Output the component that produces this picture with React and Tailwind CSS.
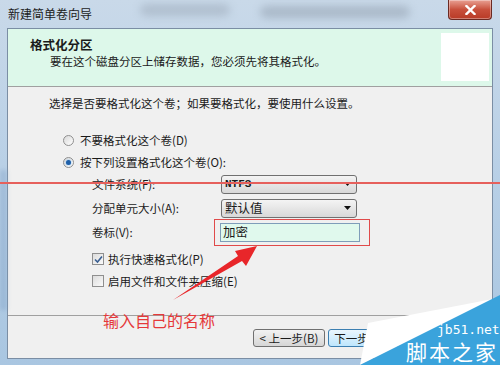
import React from 'react';

const font = { fontFamily: '"Noto Sans CJK SC", "Noto Sans", sans-serif' };

const Radio = ({ checked, label }) => (
  <div className="flex items-center h-[16px] pl-[14px]">
    <span className="w-[11px] h-[11px] rounded-full border border-[#8f8f8f] bg-gradient-to-br from-[#d9d9d9] to-[#ffffff] flex items-center justify-center">
      {checked && <span className="w-[5px] h-[5px] rounded-full bg-[#1f5fa8] shadow-[0_0_2px_#6cb3f0]" />}
    </span>
    <span className="ml-[6px]">{label}</span>
  </div>
);

const Check = ({ checked, label }) => (
  <div className="flex items-center h-[22px]">
    <span className="w-[12px] h-[12px] border border-[#8f8f8f] bg-gradient-to-br from-[#dcdcdc] to-[#fafafa] flex items-center justify-center">
      {checked && (
        <svg width="9" height="9" viewBox="0 0 9 9">
          <path d="M1 4.5 L3.5 7 L8 1.5" fill="none" stroke="#3a5f92" strokeWidth="1.6" />
        </svg>
      )}
    </span>
    <span className="ml-[4px]">{label}</span>
  </div>
);

const Select = ({ value, mono }) => (
  <div className="w-[136px] h-[19px] rounded-[3px] border border-[#707070] bg-gradient-to-b from-[#f4f4f4] to-[#d8d8d8] flex items-center justify-between pl-[3px] pr-[5px]">
    <span className={mono ? 'font-bold text-[11px] leading-[14px]' : 'text-[12.5px] leading-[16px]'} style={mono ? { fontFamily: '"Liberation Mono", monospace' } : undefined}>{value}</span>
    <svg width="7" height="4" viewBox="0 0 7 4"><path d="M0 0 H7 L3.5 4 Z" fill="#111" /></svg>
  </div>
);

const FormRow = ({ label, children }) => (
  <div className="flex items-center h-[24px]">
    <span className="w-[129px]">{label}</span>
    {children}
  </div>
);

export default function App() {
  return (
    <div className="relative w-[500px] h-[365px] overflow-hidden bg-gradient-to-b from-[#c9d9e9] via-[#b7cfe6] to-[#a9c6e1] text-[11.5px] text-[#1a1a1a]" style={font}>
      {/* blurred glass behind title */}
      <div className="absolute left-[140px] top-[4px] w-[90px] h-[12px] rounded-full bg-[#8c99a8] opacity-40 blur-[4px]" />
      <div className="absolute left-[260px] top-[6px] w-[150px] h-[12px] rounded-full bg-[#7d8a99] opacity-40 blur-[4px]" />
      <div className="absolute left-0 top-[170px] w-[7px] h-[140px] bg-[#7f9fc4] opacity-40 blur-[2px]" />

      {/* title bar */}
      <div className="h-[28px] flex items-start justify-between pl-[8px] pr-[8px]">
        <span className="mt-[6px] text-[12px] text-[#1c1c1c] leading-[16px]">新建简单卷向导</span>
        <div className="w-[44px] h-[20px] rounded-b-[4px] border border-t-0 border-[#6b2a22] bg-gradient-to-b from-[#e8a093] via-[#c8503c] to-[#b83a26] flex items-center justify-center shadow-[inset_0_0_0_1px_rgba(255,255,255,0.35)]">
          <svg width="11" height="10" viewBox="0 0 11 10">
            <path d="M1.5 1 L9.5 9 M9.5 1 L1.5 9" stroke="#fff" strokeWidth="2.4" strokeLinecap="square" />
          </svg>
        </div>
      </div>

      {/* client */}
      <div className="mx-[7px] h-[331px] border border-[#7b8ea4] flex flex-col bg-[#f0f0f0]">
        <div className="h-[58px] bg-[#ddf8ea] border-b border-[#a0a0a0] flex justify-between">
          <div className="pt-[8px]">
            <div className="pl-[22px] font-bold text-[12.5px] leading-[16px]">格式化分区</div>
            <div className="pl-[42px] leading-[16px]">要在这个磁盘分区上储存数据，您必须先将其格式化。</div>
          </div>
          <div className="w-[48px] h-[48px] bg-white mt-[4px] mr-[3px]" />
        </div>

        <div className="h-[228px] pt-[8px] pl-[41px] leading-[16px]">
          <div>选择是否要格式化这个卷；如果要格式化，要使用什么设置。</div>
          <div className="mt-[21px] flex flex-col gap-[6px]">
            <Radio label="不要格式化这个卷(D)" />
            <Radio checked label="按下列设置格式化这个卷(O):" />
          </div>
          <div className="pl-[43px] mt-[2px]">
            <FormRow label="文件系统(F):">
              <Select value="NTFS" mono />
            </FormRow>
            <FormRow label="分配单元大小(A):">
              <Select value="默认值" />
            </FormRow>
            <FormRow label="卷标(V):">
              <div className="w-[140px] h-[19px] -ml-[1px] border border-[#7f9db9] bg-[#e0f9ed] flex items-center pl-[2px] text-[12.5px]">加密</div>
            </FormRow>
            <div className="mt-[4px]">
              <Check checked label="执行快速格式化(P)" />
              <Check label="启用文件和文件夹压缩(E)" />
            </div>
          </div>
        </div>

        <div className="flex-1 border-t border-[#a0a0a0] pt-[13px] pl-[245px] flex gap-[3px]">
          <button className="w-[72px] h-[18px] rounded-[3px] border border-[#707070] bg-gradient-to-b from-[#f2f2f2] to-[#d6d6d6] text-[11.5px] leading-[16px]">&lt; 上一步(B)</button>
          <button className="w-[72px] h-[18px] rounded-[3px] border border-[#3c7fb1] bg-gradient-to-b from-[#eaf6fd] to-[#bee6fd] text-[11.5px] leading-[16px]">下一步(N) &gt;</button>
        </div>
      </div>

      {/* annotations */}
      <div className="absolute left-0 top-[182px] w-[500px] h-[2px] bg-[#e6605c]" />
      <div className="absolute left-[214px] top-[219px] w-[156px] h-[27px] border-[1.5px] border-[#e04a4a]" />
      <svg className="absolute left-0 top-0" width="500" height="365" viewBox="0 0 500 365">
        <path d="M173 300 L238 256 L235 251 L257 246 L246 266 L242 261 Z" fill="#e8262a" />
      </svg>
      <div className="absolute left-[103px] top-[310px] text-[16px] leading-[20px] text-[#e5393a]">输入自己的名称</div>

      {/* watermark */}
      <svg className="absolute left-0 top-0" width="500" height="365" viewBox="0 0 500 365">
        <path d="M368 323 L498 298 L360 365 Z" fill="#ffffff" />
        <path d="M360 365 L500 295 L500 365 Z" fill="#3aa3dc" />
      </svg>
      <div className="absolute left-[437px] top-[323px] text-[13px] leading-[14px] text-white" style={{ fontFamily: '"DejaVu Sans Mono", monospace' }}>jb51.net</div>
      <div className="absolute left-[406px] top-[340px] text-[21px] leading-[23px] text-white tracking-[2px]">脚本之家</div>
    </div>
  );
}
